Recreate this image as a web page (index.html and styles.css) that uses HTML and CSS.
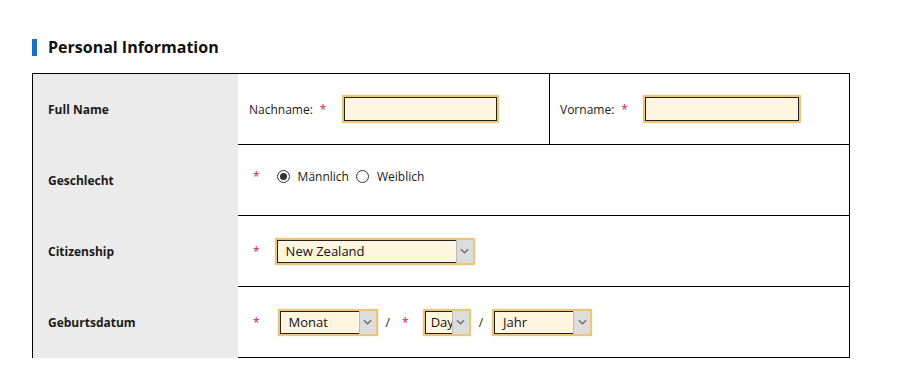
FILE: index.html
```html
<!DOCTYPE html>
<html lang="de">
<head>
<meta charset="utf-8">
<title>Personal Information</title>
<link rel="stylesheet" href="styles.css">
</head>
<body>
<div class="page">
  <h2 class="section-title">Personal Information</h2>
  <div class="form-table">
    <div class="row">
      <div class="label">Full Name</div>
      <div class="value split">
        <div class="half">
          <span class="field-label">Nachname:</span><span class="req">*</span>
          <span class="input w157"><span class="input-box"></span></span>
        </div>
        <div class="half divider">
          <span class="field-label">Vorname:</span><span class="req">*</span>
          <span class="input w158"><span class="input-box"></span></span>
        </div>
      </div>
    </div>
    <div class="row">
      <div class="label">Geschlecht</div>
      <div class="value raised">
        <span class="req first">*</span>
        <span class="radio checked"></span><span class="radio-label">Männlich</span>
        <span class="radio"></span><span class="radio-label">Weiblich</span>
      </div>
    </div>
    <div class="row">
      <div class="label">Citizenship</div>
      <div class="value">
        <span class="req first">*</span>
        <span class="select w200"><span class="select-box">New Zealand</span><span class="arrow"><svg viewBox="0 0 10 6" width="9" height="6"><path d="M1 1 L5 5 L9 1" fill="none" stroke="#6a6a6a" stroke-width="1.4"/></svg></span></span>
      </div>
    </div>
    <div class="row">
      <div class="label">Geburtsdatum</div>
      <div class="value">
        <span class="req first">*</span>
        <span class="select w100 ml-month"><span class="select-box">Monat</span><span class="arrow"><svg viewBox="0 0 10 6" width="9" height="6"><path d="M1 1 L5 5 L9 1" fill="none" stroke="#6a6a6a" stroke-width="1.4"/></svg></span></span>
        <span class="slash">/</span>
        <span class="req">*</span>
        <span class="select w48 ml-day"><span class="select-box">Day</span><span class="arrow"><svg viewBox="0 0 10 6" width="9" height="6"><path d="M1 1 L5 5 L9 1" fill="none" stroke="#6a6a6a" stroke-width="1.4"/></svg></span></span>
        <span class="slash">/</span>
        <span class="select w100"><span class="select-box">Jahr</span><span class="arrow"><svg viewBox="0 0 10 6" width="9" height="6"><path d="M1 1 L5 5 L9 1" fill="none" stroke="#6a6a6a" stroke-width="1.4"/></svg></span></span>
      </div>
    </div>
  </div>
</div>
</body>
</html>
```

FILE: styles.css
```css
* { box-sizing: border-box; }
html, body { margin: 0; padding: 0; background: #fff; }
body {
  font-family: "Open Sans", "Noto Sans", Arial, sans-serif;
  color: #1a1a1a;
}
.page { padding: 37px 0 0 32px; }

.section-title {
  margin: 0 0 15px 0;
  font-size: 16px;
  font-weight: 700;
  line-height: 21px;
  display: flex;
  align-items: center;
  gap: 11px;
  color: #111;
}
.section-title::before {
  content: "";
  width: 5px;
  height: 17px;
  background: #1e6fc5;
}

.form-table {
  width: 818px;
  border: 1px solid #000;
  border-bottom: none;
}
.row {
  display: grid;
  grid-template-columns: 205px minmax(0, 1fr);
  height: 71px;
}
.label {
  background: #ebebeb;
  display: flex;
  align-items: center;
  padding-left: 15px;
  font-size: 12px;
  font-weight: 700;
  color: #1a1a1a;
}
.value {
  border-bottom: 1px solid #000;
  display: flex;
  align-items: center;
  padding-left: 15px;
  font-size: 12px;
  min-width: 0;
}
.value.raised { padding-bottom: 7px; }
.value.split { padding-left: 0; }
.half {
  display: flex;
  align-items: center;
  height: 100%;
  width: 311px;
  flex: none;
  padding-left: 11px;
}
.half.divider {
  border-left: 1px solid #000;
  width: auto;
  flex: 1 1 0;
  min-width: 0;
  padding-left: 10px;
}
.field-label { color: #1a1a1a; }
.req {
  color: #d8184a;
  font-size: 12px;
  margin-left: 7px;
  margin-right: 13px;
}
.req.first { margin-left: 0; margin-right: 13px; }

.input {
  display: inline-block;
  flex: none;
  height: 28px;
  border: 2px solid #ecc677;
  border-radius: 1px;
  box-shadow: 0 0 2px #f7e3b0;
}
.input-box {
  display: block;
  height: 100%;
  border: 1px solid #222;
  background: #fff6df;
}
.w157 { width: 157px; margin-left: 3px; }
.w158 { width: 158px; margin-left: 2px; }

.select {
  display: inline-flex;
  flex: none;
  height: 27px;
  border: 2px solid #ecc677;
  background: #fff6df;
  box-shadow: 0 0 2px #f7e3b0;
  overflow: hidden;
}
.select-box {
  flex: 1;
  min-width: 0;
  overflow: hidden;
  white-space: nowrap;
  border: 1px solid #222;
  border-right: none;
  background: #fff6df;
  font-size: 13px;
  line-height: 21px;
  padding-left: 8px;
  color: #111;
}
.arrow {
  width: 17px;
  flex: none;
  background: #dcdcdc;
  border-left: 1px solid #bbb;
  display: flex;
  align-items: center;
  justify-content: center;
}
.w200 { width: 200px; margin-left: 2px; }
.w100 { width: 100px; }
.w48 { width: 48px; }
.ml-month { margin-left: 5px; }
.ml-day { margin-left: 1px; }
.w48 .select-box { padding-left: 5px; }
.slash { margin: 0 9px 0 8px; color: #222; }
.slash + .req { margin-left: 3px; }

.radio {
  display: inline-block;
  width: 13px;
  height: 13px;
  border: 1px solid #333;
  border-radius: 50%;
  background: #fff;
  position: relative;
  margin-right: 8px;
  flex: none;
}
.req.first + .radio { margin-left: 4px; }
.radio.checked::after {
  content: "";
  position: absolute;
  left: 2px; top: 2px;
  width: 7px; height: 7px;
  border-radius: 50%;
  background: #333;
}
.radio-label { margin-right: 7px; color: #1a1a1a; }
```
